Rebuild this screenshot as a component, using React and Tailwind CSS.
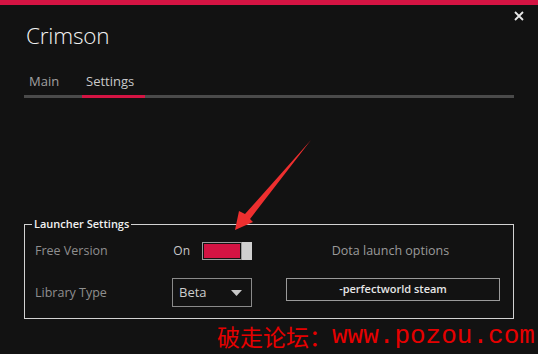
import React from "react";

export default function App() {
  const ui = { fontFamily: '"Open Sans", "Noto Sans", sans-serif' };
  return (
    <div className="relative w-[538px] h-[354px] bg-[#121212] overflow-hidden" style={ui}>
      <div className="h-[5px] bg-[#d41443]" />
      <div className="flex justify-end pr-[14px] pt-[6px] h-[14px]">
        <svg width="10" height="10" viewBox="0 0 10 10">
          <path d="M1 1 L9 9 M9 1 L1 9" stroke="#e8e8e8" strokeWidth="1.8" />
        </svg>
      </div>
      <div className="px-[24px]">
        <div className="ml-[2px] mt-[2px] text-[22.5px] leading-[30px] font-light text-[#f2f2f2] tracking-[-0.2px]">
          Crimson
        </div>
        <div className="mt-[21px] flex text-[13px] leading-[18px]">
          <div className="w-[58px] pl-[5px] text-[#a0a0a0]">Main</div>
          <div className="w-[63px] pl-[4px] text-[#c9c9c9]">Settings</div>
        </div>
        <div className="mt-[5px] flex h-[3px] w-[490px] bg-[#4a4a4a]">
          <div className="ml-[58px] w-[63px] bg-[#d41443]" />
        </div>
        <fieldset className="mt-[118px] w-[490px] border border-[#d2d2d2] pb-[11px]">
          <legend className="ml-[7px] px-[2px] text-[11px] leading-[16px] font-semibold text-[#f0f0f0]">
            Launcher Settings
          </legend>
          <div className="flex mt-[10px] text-[12.5px]">
            <div className="w-[147px] pl-[10px] flex flex-col gap-[18px] text-[#8f8f8f]">
              <div className="h-[18px] leading-[18px]">Free Version</div>
              <div className="h-[29px] leading-[29px]">Library Type</div>
            </div>
            <div className="w-[80px] flex flex-col gap-[18px] items-end">
              <div className="flex items-center h-[18px]">
                <span className="text-[#c8c8c8] text-[12px] mr-[12px]">On</span>
                <div className="w-[40px] h-[18px] border border-[#9c9c9c] p-[1px]">
                  <div className="w-full h-full bg-[#d41443]" />
                </div>
                <div className="w-[10px] h-[18px] bg-[#d0d0d0]" />
              </div>
              <div className="w-[80px] h-[29px] border border-[#8a8a8a] flex items-center justify-between pl-[6px] pr-[9px]">
                <span className="text-[#cdcdcd] text-[13px]">Beta</span>
                <svg width="11" height="6" viewBox="0 0 11 6">
                  <path d="M0 0 H11 L5.5 6 Z" fill="#c8c8c8" />
                </svg>
              </div>
            </div>
            <div className="ml-[34px] w-[214px] flex flex-col gap-[18px]">
              <div className="h-[18px] leading-[18px] text-center text-[#9a9a9a] pr-[5px]">Dota launch options</div>
              <div className="h-[23px] border border-[#9a9a9a] flex items-center justify-center text-[11px] font-semibold text-[#e6e6e6]">
                -perfectworld steam
              </div>
            </div>
          </div>
        </fieldset>
      </div>

      <svg className="absolute left-0 top-0 pointer-events-none" width="538" height="354" viewBox="0 0 538 354">
        <polygon points="311,140 250,219 253,222 235,230 239,211 245,214" fill="#ee2f2f" />
      </svg>

      <div className="absolute left-[217px] top-[321px] flex items-end text-[#e60000] whitespace-nowrap">
        <span className="text-[23px] leading-[30px]" style={{ fontFamily: '"Noto Sans CJK SC", serif' }}>破走论坛：</span>
        <span className="text-[26px] leading-[30px]" style={{ fontFamily: '"Liberation Mono", monospace' }}>www.pozou.com</span>
      </div>
    </div>
  );
}
